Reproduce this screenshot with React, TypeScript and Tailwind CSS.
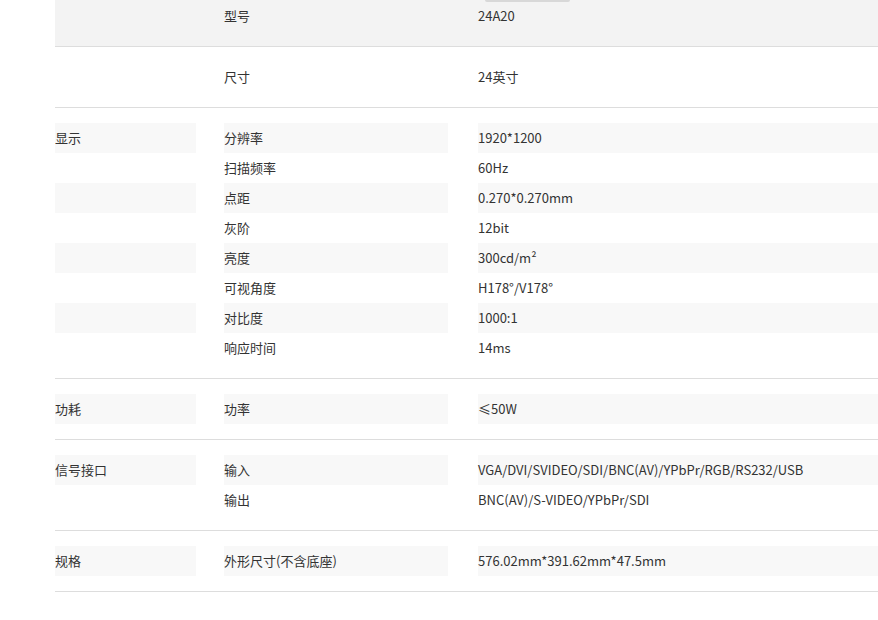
import React from "react";

type Row = [string, string];
const sections: { label: string; rows: Row[]; shaded?: boolean }[] = [
  { label: "尺寸", rows: [["尺寸", "24英寸"]] },
  {
    label: "显示",
    rows: [
      ["分辨率", "1920*1200"],
      ["扫描频率", "60Hz"],
      ["点距", "0.270*0.270mm"],
      ["灰阶", "12bit"],
      ["亮度", "300cd/m²"],
      ["可视角度", "H178°/V178°"],
      ["对比度", "1000:1"],
      ["响应时间", "14ms"],
    ],
  },
  { label: "功耗", rows: [["功率", "≤50W"]] },
  { label: "信号接口", rows: [["输入", "VGA/DVI/SVIDEO/SDI/BNC(AV)/YPbPr/RGB/RS232/USB"], ["输出", "BNC(AV)/S-VIDEO/YPbPr/SDI"]] },
  { label: "规格", rows: [["外形尺寸(不含底座)", "576.02mm*391.62mm*47.5mm"]] },
];

function Line({ c1, c2, c3, shade }: { c1: string; c2: string; c3: string; shade: boolean }) {
  const bg = shade ? "bg-[#f8f8f8]" : "";
  return (
    <div className="flex h-[30px] items-center">
      <div className={`w-[141px] h-full flex items-center ${c1 ? bg : ""}`}>{c1}</div>
      <div className={`ml-[28px] w-[224px] h-full flex items-center ${bg}`}>{c2}</div>
      <div className={`ml-[30px] flex-1 h-full flex items-center ${bg}`}>{c3}</div>
    </div>
  );
}

export default function App() {
  return (
    <div className="w-[878px] h-[620px] bg-white pl-[55px] text-[13px] text-[#333]" style={{ fontFamily: '"Noto Sans CJK SC", "Microsoft YaHei", sans-serif' }}>
      <div className="relative h-[47px] bg-[#f3f3f3] border-b border-[#dddddd] pt-[1px]">
        <div className="absolute top-0 left-[430px] w-[85px] h-[2px] rounded-b bg-[#d8d8d8]" />
        <Line c1="" c2="型号" c3="24A20" shade={false} />
      </div>
      <div className="h-[61px] flex items-center border-b border-[#dddddd]">
        <div className="w-full"><Line c1="" c2="尺寸" c3="24英寸" shade={false} /></div>
      </div>
      {sections.slice(1).map((s) => (
        <div key={s.label} className="py-[15px] border-b border-[#dddddd]">
          {s.rows.map((r, i) => (
            <Line key={i} c1={i % 2 === 0 ? (i === 0 ? s.label : " ") : ""} c2={r[0]} c3={r[1]} shade={i % 2 === 0} />
          ))}
        </div>
      ))}
    </div>
  );
}
